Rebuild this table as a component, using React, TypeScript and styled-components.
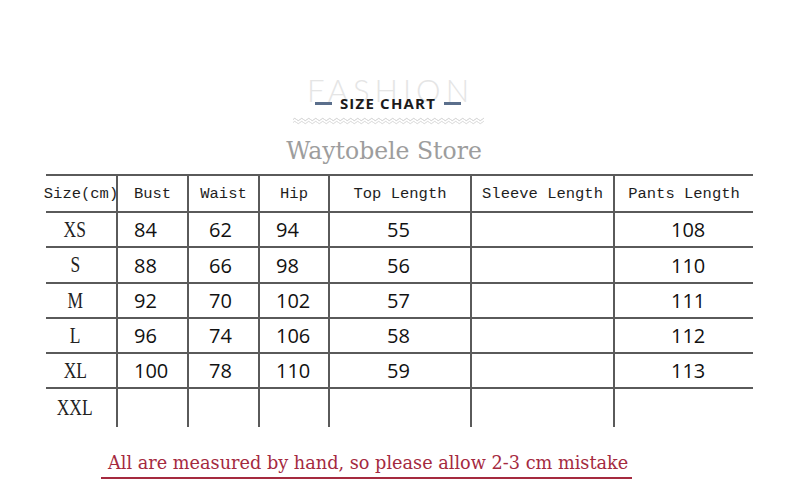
import React from 'react';
import styled, { createGlobalStyle } from 'styled-components';

const Global = createGlobalStyle`
  html, body { margin: 0; padding: 0; background: #ffffff; }
  #root { width: 800px; height: 500px; }
`;

const Page = styled.div`
  width: 800px;
  height: 500px;
  box-sizing: border-box;
  padding-top: 74px;
  display: flex;
  flex-direction: column;
  align-items: center;
  background: #ffffff;
  overflow: hidden;
`;

const Heading = styled.div`
  display: flex;
  flex-direction: column;
  align-items: center;
  padding-right: 24px;
`;

const Fashion = styled.div`
  font-family: Lato, "Open Sans", sans-serif;
  font-weight: 300;
  font-size: 31px;
  line-height: 32px;
  letter-spacing: 5px;
  margin-right: -5px;
  color: #e5e5e5;
`;

const TitleRow = styled.div`
  display: flex;
  align-items: center;
  gap: 8px;
  margin-top: -12px;
  height: 18px;
`;

const Dash = styled.span`
  width: 17px;
  height: 3px;
  background: #5b6f8c;
`;

const SizeChart = styled.span`
  font-family: "Open Sans", sans-serif;
  font-weight: 700;
  font-size: 15px;
  line-height: 18px;
  letter-spacing: 1.2px;
  color: #1b1b1b;
`;

const Waves = styled.svg`
  display: block;
  margin-top: 5px;
`;

const Store = styled.div`
  font-family: "DejaVu Serif", serif;
  font-size: 23.5px;
  line-height: 26px;
  color: #9d9d9d;
  margin-top: 13px;
  margin-left: -8px;
`;

const Table = styled.div`
  align-self: flex-start;
  margin-left: 46px;
  margin-top: 10px;
  display: grid;
  grid-template-columns: 70px 71px 71px 70px 142px 143px 140px;
  grid-template-rows: 37px 35px 36px 35px 35px 35px 40px;
`;

const Cell = styled.div<{ $first?: boolean; $pad?: number }>`
  box-sizing: border-box;
  border-top: 2px solid #5a5a5a;
  border-left: ${(p) => (p.$first ? 'none' : '2px solid #5a5a5a')};
  display: flex;
  align-items: center;
  justify-content: ${(p) => (p.$pad !== undefined ? 'flex-start' : 'center')};
  padding-left: ${(p) => (p.$pad !== undefined ? `${p.$pad}px` : '0')};
  white-space: nowrap;
  min-width: 0;
`;

const HeadText = styled.span`
  font-family: "Liberation Mono", "DejaVu Sans Mono", monospace;
  font-size: 15.5px;
  color: #1e1e1e;
`;

const SizeLabel = styled.span`
  font-family: "Liberation Serif", serif;
  font-size: 23px;
  color: #222222;
  display: inline-block;
  transform: scaleX(0.76);
  margin-right: 12px;
`;

const Num = styled.span`
  font-family: "Open Sans", "Noto Sans", sans-serif;
  font-size: 20px;
  color: #111111;
`;

const Note = styled.div`
  align-self: flex-start;
  margin-left: 101px;
  margin-top: 26px;
  padding: 0 4px 4px 7px;
  border-bottom: 2px solid #a52a3f;
  font-family: "DejaVu Serif", serif;
  font-size: 17.7px;
  line-height: 20px;
  color: #a52a3f;
`;

const headers = ['Size(cm)', 'Bust', 'Waist', 'Hip', 'Top Length', 'Sleeve Length', 'Pants Length'];
const pads = [undefined, 16, 20, 16, 57, 0, 56];

const rows: { size: string; vals: string[] }[] = [
  { size: 'XS', vals: ['84', '62', '94', '55', '', '108'] },
  { size: 'S', vals: ['88', '66', '98', '56', '', '110'] },
  { size: 'M', vals: ['92', '70', '102', '57', '', '111'] },
  { size: 'L', vals: ['96', '74', '106', '58', '', '112'] },
  { size: 'XL', vals: ['100', '78', '110', '59', '', '113'] },
  { size: 'XXL', vals: ['', '', '', '', '', ''] },
];

function wavePath(y: number, width: number, period: number, amp: number) {
  let d = `M0 ${y}`;
  const half = period / 2;
  for (let x = 0; x < width; x += period) {
    d += ` q${half / 2} ${-amp} ${half} 0 q${half / 2} ${amp} ${half} 0`;
  }
  return d;
}

export default function App() {
  return (
    <>
      <Global />
      <Page>
        <Heading>
          <Fashion>FASHION</Fashion>
          <TitleRow>
            <Dash />
            <SizeChart>SIZE CHART</SizeChart>
            <Dash />
          </TitleRow>
          <Waves width="191" height="8" viewBox="0 0 191 8">
            <path d={wavePath(2.5, 190, 7, 2.4)} fill="none" stroke="#cfcfcf" strokeWidth="1" />
            <path d={wavePath(5.5, 190, 7, 2.4)} fill="none" stroke="#d8d8d8" strokeWidth="1" />
          </Waves>
          <Store>Waytobele Store</Store>
        </Heading>
        <Table>
          {headers.map((h, i) => (
            <Cell key={h} $first={i === 0}>
              <HeadText>{h}</HeadText>
            </Cell>
          ))}
          {rows.map((r) => (
            <React.Fragment key={r.size}>
              <Cell $first>
                <SizeLabel>{r.size}</SizeLabel>
              </Cell>
              {r.vals.map((v, i) => (
                <Cell key={i} $pad={pads[i + 1]}>
                  {v && <Num>{v}</Num>}
                </Cell>
              ))}
            </React.Fragment>
          ))}
        </Table>
        <Note>All are measured by hand, so please allow 2-3 cm mistake</Note>
      </Page>
    </>
  );
}
